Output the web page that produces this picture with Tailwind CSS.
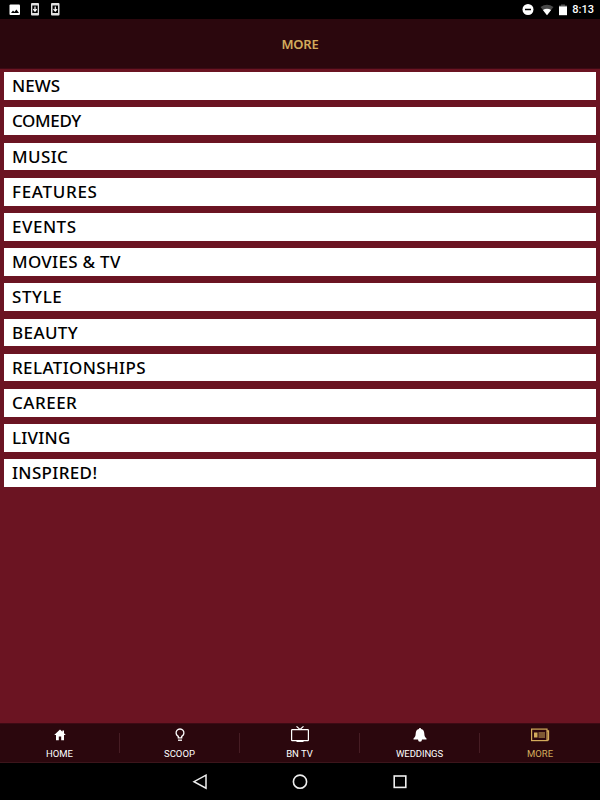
<!DOCTYPE html>
<html lang="en">
<head>
  <meta charset="UTF-8" />
  <meta name="viewport" content="width=device-width, initial-scale=1.0" />
  <title>More</title>
  <script src="https://cdn.jsdelivr.net/npm/@tailwindcss/browser@4"></script>
</head>
<body class="bg-[#6b1422] font-['Roboto',sans-serif]">
  <div class="flex h-[800px] w-[600px] flex-col overflow-hidden">
    <!-- Status bar -->
    <div class="flex h-[19px] shrink-0 items-center justify-between bg-black pr-[6px] pl-[9px] text-white">
      <div class="flex items-center">
        <svg class="mr-[10px] h-[12px] w-[12px]" viewBox="0 0 12 12"><rect x=".5" y=".5" width="10.5" height="10.5" rx="1" fill="#fff" /><path d="M2 9 4 6.6l1.4 1.5L7.4 5.6 10 9z" fill="#000" /></svg>
        <svg class="mr-[11px] h-[13px] w-[9px]" viewBox="0 0 9 13"><rect x="0" y="0" width="8" height="12.5" rx="1" fill="#e2e2e2" /><path d="M1.300 2.500h5.400v7.500H1.300z" fill="#000" /><path d="M4 3.500v5M2.300 6.200l1.700 2 1.700-2" stroke="#fff" stroke-width="1.200" fill="none" /></svg>
        <svg class="h-[13px] w-[9px]" viewBox="0 0 9 13"><rect x="0" y="0" width="8.500" height="12.500" rx="1" fill="#e2e2e2" /><path d="M1.500 2.500H7v7.500H1.500z" fill="#000" /><path d="M4.300 3.500v5M2.500 6.200l1.800 2 1.800-2" stroke="#fff" stroke-width="1.200" fill="none" /></svg>
      </div>
      <div class="flex items-center">
        <svg class="mr-[6px] h-[12px] w-[12px]" viewBox="0 0 12 12"><circle cx="6" cy="5.500" r="5.500" fill="#fff" /><path d="M3 5.500h6" stroke="#000" stroke-width="1.500" /></svg>
        <svg class="mr-[5px] h-[12px] w-[14px]" viewBox="0 0 14 12"><path d="M.5 3.100Q7-1.700 13.500 3.100L7 11.200z" fill="#484848" /><path d="M2.900 6Q7 3.400 11.100 6L7 11.200z" fill="#fff" /></svg>
        <svg class="mr-[5px] h-[12px] w-[8px]" viewBox="0 0 8 12"><path d="M2 .4h4v1.200h2v2H0v-2h2z" fill="#555" /><path d="M0 2.500h8v8.700H0z" fill="#fff" /></svg>
        <span class="text-[11px] leading-none font-medium">8:13</span>
      </div>
    </div>

    <!-- Header -->
    <header class="flex h-[50px] shrink-0 items-center justify-center border-b border-[#3d0a14] bg-[#2b070d] pt-px">
      <h1 class="font-['Noto_Sans',sans-serif] text-[13px] leading-none font-semibold tracking-[-0.2px] text-[#d3ab5c]">MORE</h1>
    </header>

    <!-- Category list -->
    <ul class="flex flex-1 flex-col gap-[7.5px] px-1 pt-[3.3px] font-['Noto_Sans',sans-serif] text-[17px] leading-[28.5px] font-medium text-black">
      <li class="h-[27.7px] bg-white pl-2">NEWS</li>
      <li class="h-[27.7px] bg-white pl-2 tracking-[-0.35px]">COMEDY</li>
      <li class="h-[27.7px] bg-white pl-2 tracking-[0.4px]">MUSIC</li>
      <li class="h-[27.7px] bg-white pl-2 tracking-[0.7px]">FEATURES</li>
      <li class="h-[27.7px] bg-white pl-2 tracking-[0.5px]">EVENTS</li>
      <li class="h-[27.7px] bg-white pl-2 tracking-[0.3px]">MOVIES &amp; TV</li>
      <li class="h-[27.7px] bg-white pl-2 tracking-[0.6px]">STYLE</li>
      <li class="h-[27.7px] bg-white pl-2 tracking-[0.4px]">BEAUTY</li>
      <li class="h-[27.7px] bg-white pl-2 tracking-[0.37px]">RELATIONSHIPS</li>
      <li class="h-[27.7px] bg-white pl-2 tracking-[0.5px]">CAREER</li>
      <li class="h-[27.7px] bg-white pl-2 tracking-[0.25px]">LIVING</li>
      <li class="h-[27.7px] bg-white pl-2 tracking-[0.35px]">INSPIRED!</li>
    </ul>

    <!-- Tabs -->
    <nav class="grid h-[40px] shrink-0 grid-cols-5 items-center border-y border-t-[#3d0a14] border-b-[#3c151b] bg-[#2b070d] text-[9.5px] leading-none text-white">
      <div class="flex items-center">
        <a class="flex flex-1 flex-col items-center gap-[7px] pt-px">
          <svg class="h-[14px] w-[20px]" viewBox="0 0 20 14"><path d="M10 1.600 4.200 7H6v5.200h2.800V8.600h2.400v3.600H14V7h1.800L14 5.300V2.500h-1.600v1.300z" fill="#fff" /></svg>
          <span>HOME</span>
        </a>
        <span class="h-5 w-px bg-[#461c23]"></span>
      </div>
      <div class="flex items-center">
        <a class="flex flex-1 flex-col items-center gap-[7px] pt-px">
          <svg class="h-[14px] w-[20px]" viewBox="0 0 20 14" fill="none" stroke="#fff" stroke-width="1.300"><path d="M8.300 9.900V8.400a3.900 3.900 0 1 1 3.400 0v1.500z" /><path d="M8 12.200h4" /></svg>
          <span>SCOOP</span>
        </a>
        <span class="h-5 w-px bg-[#461c23]"></span>
      </div>
      <div class="flex items-center">
        <a class="flex flex-1 flex-col items-center gap-[7px] pt-px">
          <svg class="-mt-[2px] h-[16px] w-[20px]" viewBox="0 0 20 16" fill="none" stroke="#fff" stroke-width="1.200"><rect x="1.600" y="3.600" width="16.800" height="11" rx=".6" /><path d="M6.500.4 10 3.400l3.500-3M6.500 15.400h7" /></svg>
          <span>BN TV</span>
        </a>
        <span class="h-5 w-px bg-[#461c23]"></span>
      </div>
      <div class="flex items-center">
        <a class="flex flex-1 flex-col items-center gap-[7px] pt-px">
          <svg class="h-[14px] w-[20px]" viewBox="0 0 20 14"><path d="M10 0c-.7 0-1 .4-1 1C6.700 1.500 5.800 3.200 5.700 5.500 5.600 8 5 9.200 3.500 10.500v1h13v-1C15 9.200 14.400 8 14.300 5.500 14.200 3.200 13.300 1.500 11 1c0-.6-.3-1-1-1zM8 11.500a2 2.300 0 0 0 4 0z" fill="#fff" /></svg>
          <span class="tracking-[-0.1px]">WEDDINGS</span>
        </a>
        <span class="h-5 w-px bg-[#461c23]"></span>
      </div>
      <a class="flex flex-col items-center gap-[7px] pt-px text-[#d3ab5c]">
        <svg class="h-[14px] w-[20px]" viewBox="0 0 20 14" fill="none" stroke="#d3ab5c"><rect x="1.600" y="1.100" width="15.400" height="11.500" stroke-width="1.200" /><path d="M17 3h1.400v8.600l-1.200 1" stroke-width="1.500" /><path d="M4 4.500h3.500v5H4z" fill="#d3ab5c" stroke="none" /><path d="M8.500 5H15M8.500 7H15M8.500 9H15" stroke-width="1" /></svg>
        <span>MORE</span>
      </a>
    </nav>

    <!-- System navigation -->
    <div class="flex h-[37px] shrink-0 items-center justify-center gap-[84px] bg-black">
      <svg class="h-4 w-4" viewBox="0 0 16 16" fill="none" stroke="#eee" stroke-width="1.500"><path d="M14 1.200v13L2 7.700z" /></svg>
      <svg class="h-4 w-4" viewBox="0 0 16 16" fill="none" stroke="#eee" stroke-width="1.600"><circle cx="8" cy="7.700" r="6.600" /></svg>
      <svg class="h-4 w-4" viewBox="0 0 16 16" fill="none" stroke="#eee" stroke-width="1.600"><rect x="2.200" y="2" width="11.600" height="11.400" /></svg>
    </div>
  </div>
</body>
</html>
